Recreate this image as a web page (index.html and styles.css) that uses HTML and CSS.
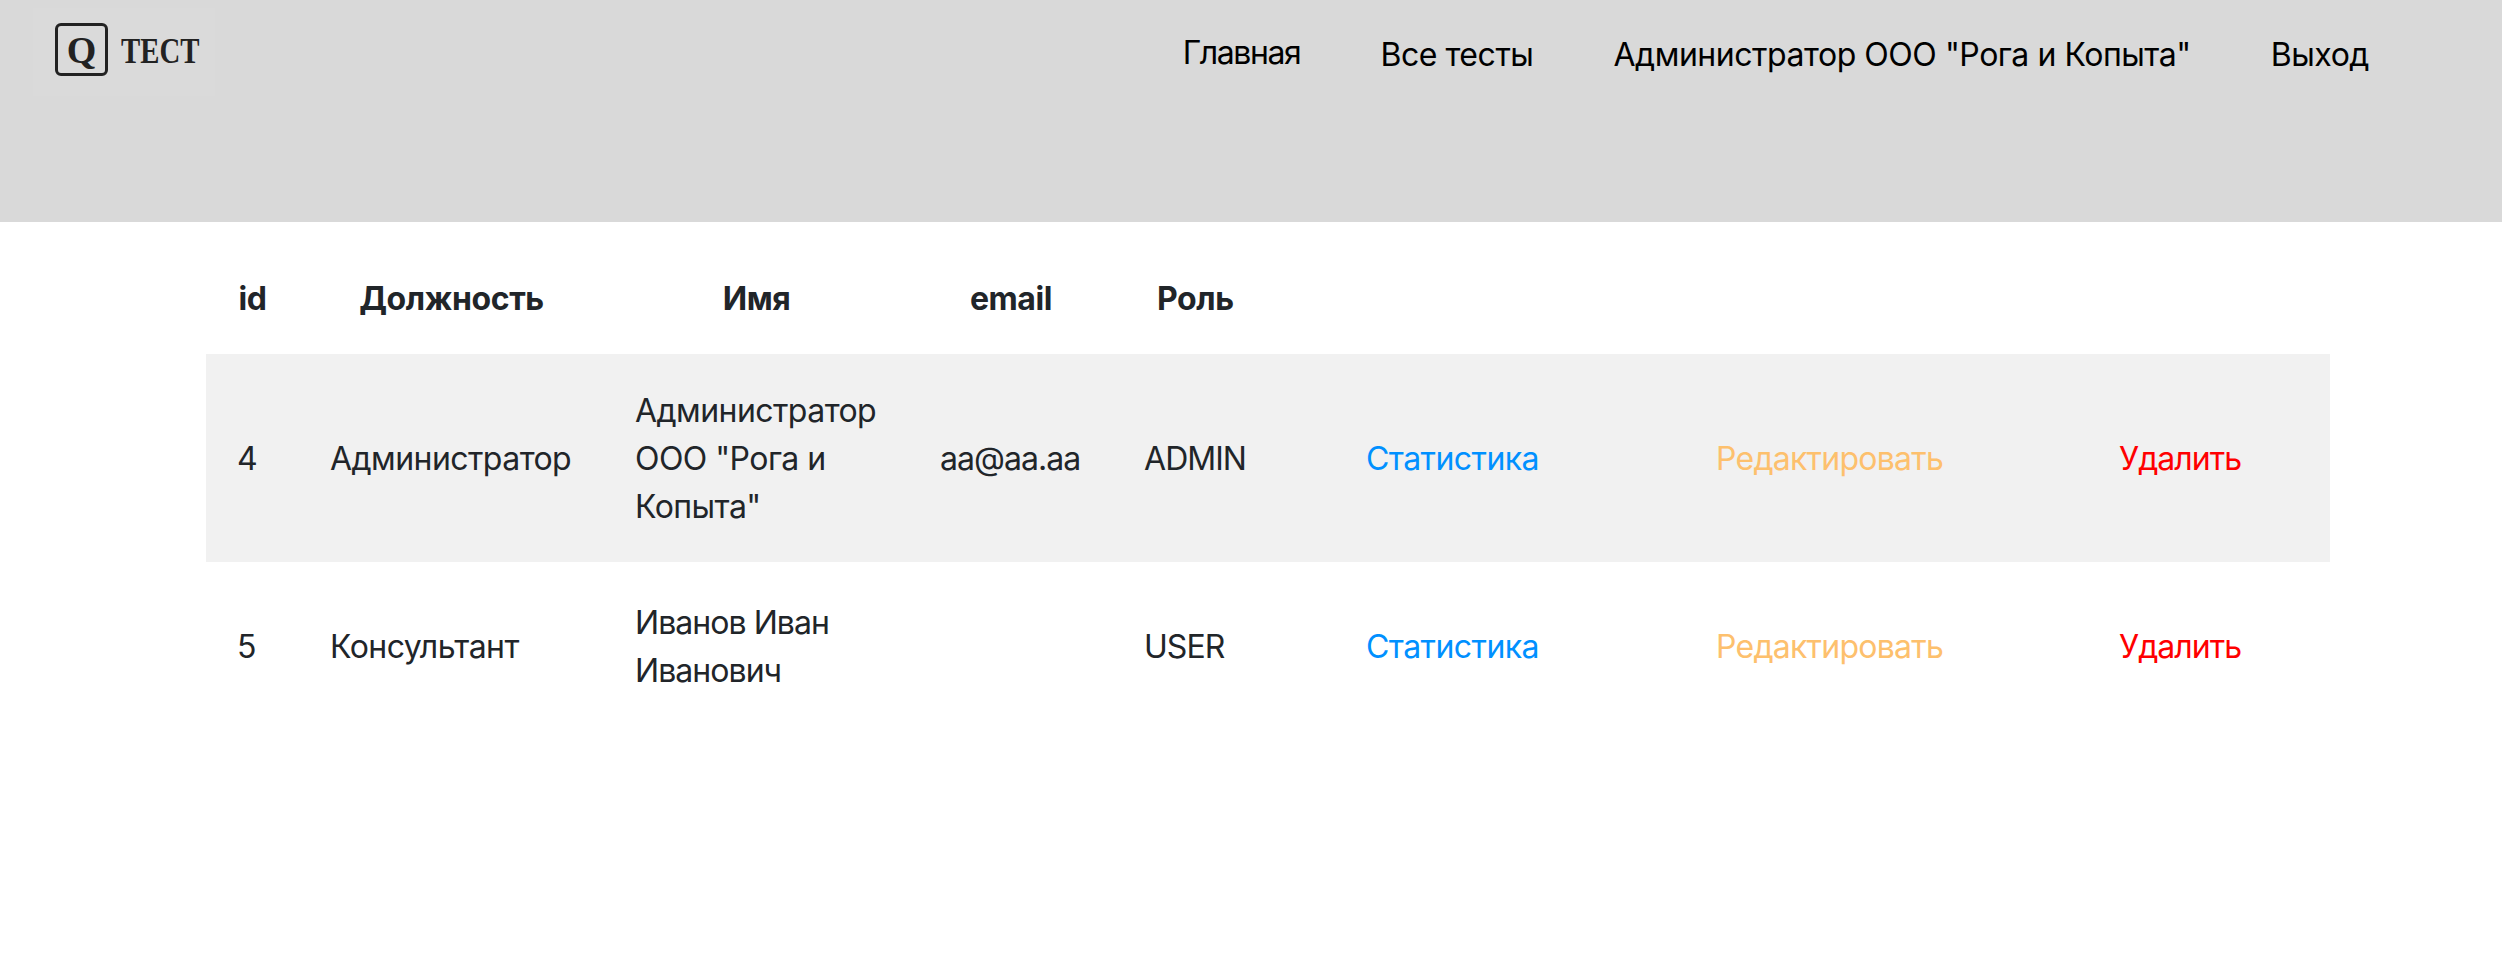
FILE: index.html
```html
<!DOCTYPE html>
<html lang="ru">
<head>
<meta charset="utf-8">
<title>Q TECT</title>
<link rel="stylesheet" href="styles.css">
</head>
<body>
<header class="topbar">
  <a class="brand" href="#">
    <span class="brand-mark">Q</span>
    <span class="brand-name">ТЕСТ</span>
  </a>
  <nav class="nav">
    <a class="nav-link nav-link-home" href="#">Главная</a>
    <a class="nav-link" href="#">Все тесты</a>
    <a class="nav-link" href="#">Администратор ООО "Рога и Копыта"</a>
    <a class="nav-link" href="#">Выход</a>
  </nav>
</header>
<main class="content">
  <table class="users">
    <thead>
      <tr>
        <th class="col-id">id</th>
        <th class="col-post">Должность</th>
        <th class="col-name">Имя</th>
        <th class="col-email">email</th>
        <th class="col-role">Роль</th>
        <th class="col-stat"></th>
        <th class="col-edit"></th>
        <th class="col-del"></th>
      </tr>
    </thead>
    <tbody>
      <tr class="striped">
        <td>4</td>
        <td>Администратор</td>
        <td>Администратор ООО "Рога и Копыта"</td>
        <td class="tight">aa@aa.aa</td>
        <td class="tight">ADMIN</td>
        <td><a class="link-stat" href="#">Статистика</a></td>
        <td><a class="link-edit" href="#">Редактировать</a></td>
        <td><a class="link-del" href="#">Удалить</a></td>
      </tr>
      <tr class="tall">
        <td>5</td>
        <td>Консультант</td>
        <td class="tight">Иванов Иван Иванович</td>
        <td></td>
        <td class="tight">USER</td>
        <td><a class="link-stat" href="#">Статистика</a></td>
        <td><a class="link-edit" href="#">Редактировать</a></td>
        <td><a class="link-del" href="#">Удалить</a></td>
      </tr>
    </tbody>
  </table>
</main>
</body>
</html>
```
FILE: styles.css
```css
* { box-sizing: border-box; }
html, body { margin: 0; padding: 0; }
body {
  background: #fff;
  color: #212529;
  font-family: Inter, "Liberation Sans", sans-serif;
  font-size: 32px;
  line-height: 48px;
  letter-spacing: -0.55px;
}
a { text-decoration: none; }

.topbar {
  height: 222px;
  background: #d9d9d9;
  display: flex;
  justify-content: space-between;
  align-items: flex-start;
  padding: 8px 133px 0 33px;
}
.brand {
  display: flex;
  align-items: flex-start;
  gap: 13px;
  width: 182px;
  height: 88px;
  padding: 15px 0 0 22px;
  background: #dadada;
  color: #222;
  font-family: "Liberation Serif", serif;
  font-weight: 700;
  letter-spacing: 0;
}
.brand-mark {
  flex: none;
  width: 53px;
  height: 53px;
  border: 3px solid #222;
  border-radius: 6px;
  display: flex;
  align-items: center;
  justify-content: center;
  font-size: 38px;
  line-height: 1;
}
.brand-name {
  flex: none;
  width: 78px;
  margin-top: 10px;
  font-size: 36px;
  line-height: 1;
  white-space: nowrap;
  transform: scaleX(0.8);
  transform-origin: left center;
}
.nav {
  display: flex;
  gap: 80px;
  padding-top: 23px;
  letter-spacing: -0.46px;
}
.nav-link { color: #000; }
.nav-link-home { margin-top: -2px; letter-spacing: -1.4px; }

.content { padding: 20px 172px 0 206px; }
.users {
  width: 2124px;
  border-collapse: collapse;
  table-layout: fixed;
}
.users th, .users td {
  padding: 33px 32px 31px;
  vertical-align: middle;
}
.users td { padding-left: 31px; font-weight: 400; }
.users .tall td { padding-top: 37px; padding-bottom: 35px; }
.users th { font-weight: 700; text-align: center; letter-spacing: -0.4px; }
.users .tight { letter-spacing: -0.95px; }
.users .col-role { text-align: left; padding-left: 44px; }
.striped { background: #f1f1f1; }
.col-id { width: 93px; }
.col-post { width: 305px; }
.col-name { width: 305px; }
.col-email { width: 204px; }
.col-role { width: 222px; }
.col-stat { width: 350px; }
.col-edit { width: 403px; }
.col-del { width: 242px; }
.link-stat { color: #0090ff; }
.link-edit { color: #fdc06d; letter-spacing: -0.75px; }
.link-del { color: #ff0000; letter-spacing: -0.95px; }
```
